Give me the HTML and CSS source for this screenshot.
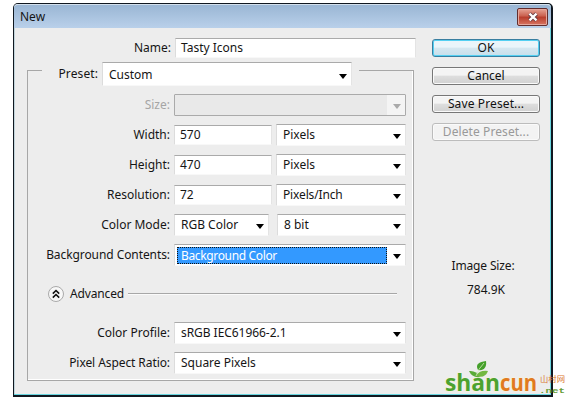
FILE: index.html
```html
<!DOCTYPE html>
<html lang="en">
<head>
<meta charset="utf-8">
<title>New</title>
<link rel="stylesheet" href="styles.css">
</head>
<body>
<main class="dialog">
  <header class="titlebar"><span>New</span>
    <button class="close" aria-label="Close"><svg width="12" height="10" viewBox="0 0 12 10"><path d="M2.5 1.7 9.5 8.3M9.5 1.7 2.5 8.3" stroke="#653b43" stroke-width="4"/><path d="M2.5 1.7 9.5 8.3M9.5 1.7 2.5 8.3" stroke="#fff" stroke-width="2.3"/></svg></button>
  </header>
  <div class="content">
    <section class="form">
      <div class="row name-row"><label class="label">Name:</label><div class="field name">Tasty Icons</div></div>
      <div class="group">
        <div class="preset-row"><label class="preset-label">Preset:</label><div class="field select preset"><span>Custom</span></div></div>
        <div class="row size-row"><label class="label dim">Size:</label><div class="field select wide disabled"></div></div>
        <div class="row"><label class="label">Width:</label><div class="field number">570</div><div class="field select unit"><span>Pixels</span></div></div>
        <div class="row"><label class="label">Height:</label><div class="field number">470</div><div class="field select unit"><span>Pixels</span></div></div>
        <div class="row"><label class="label">Resolution:</label><div class="field number">72</div><div class="field select unit"><span class="inch">Pixels/Inch</span></div></div>
        <div class="row"><label class="label">Color Mode:</label><div class="field select mode"><span>RGB Color</span></div><div class="field select depth"><span>8 bit</span></div></div>
        <div class="row"><label class="label contents-label">Background Contents:</label><div class="field select wide active"><span class="chosen">Background Color</span></div></div>
        <div class="advanced"><svg width="18" height="18" viewBox="0 0 18 18"><circle cx="9" cy="9" r="7.5" fill="#f8f8f8" stroke="#aaa"/><path d="M5.8 8.6 9 5.5l3.2 3.1M5.8 12.6 9 9.5l3.2 3.1" fill="none" stroke="#111" stroke-width="1.6"/></svg><span>Advanced</span><i></i></div>
        <div class="row"><label class="label">Color Profile:</label><div class="field select wide profile"><span>sRGB IEC61966-2.1</span></div></div>
        <div class="row"><label class="label ratio-label">Pixel Aspect Ratio:</label><div class="field select wide"><span>Square Pixels</span></div></div>
      </div>
    </section>
    <aside class="side">
      <button class="button primary">OK</button>
      <button class="button">Cancel</button>
      <button class="button save">Save Preset...</button>
      <button class="button off" disabled>Delete Preset...</button>
      <p class="image-size">Image Size:</p>
      <p class="size-value">784.9K</p>
    </aside>
  </div>
</main>
<svg class="watermark" width="130" height="42" viewBox="440 358 130 42">
  <g class="brand"><text x="445" y="391" textLength="55" lengthAdjust="spacingAndGlyphs" fill="#4ca22f">shan</text><text x="500" y="391" textLength="37" lengthAdjust="spacingAndGlyphs" fill="#e17a20">cun</text></g>
  <path d="M478 370C475 364 479 362 486 361C487 367 484 371 478 370Z" fill="#45a02b"/>
  <path d="M469 371Q476 370 480 377Q472 378 469 371Z" fill="#59ab37"/>
  <path d="M488 371Q479 370 476 376Q485 379 488 371Z" fill="#73b842"/>
  <path d="M476 376Q478 369 484 363" fill="none" stroke="#d5e7bc" stroke-width=".8"/>
  <text class="region" x="540" y="382" textLength="25" lengthAdjust="spacingAndGlyphs">山村网</text>
  <text class="net" x="539" y="392.5" textLength="26" lengthAdjust="spacingAndGlyphs">.net</text>
</svg>
</body>
</html>
```
FILE: styles.css
```css
* { box-sizing: border-box; }
body { margin: 0; padding: 3px 0 0 13px; background: #fff; overflow: hidden; font: 12px/18px "Noto Sans", sans-serif; color: #151515; }
.dialog { width: 540px; height: 394px; border: solid #101820; border-width: 1px 2px 2px 1px; border-radius: 5px 5px 0 0; background: #ededed; box-shadow: inset -1px -1px #69d5df, inset 1px 0 #c2d5dc; }
.titlebar { height: 24px; display: flex; align-items: center; justify-content: space-between; padding: 0 3px 0 6px; border-top: 1px solid #d3e0ed; border-radius: 4px 4px 0 0; background: linear-gradient(#9ab6d4, #b9d0ea); }
.close { width: 31px; height: 18px; margin-top: 1px; padding: 0; display: flex; align-items: center; justify-content: center; border: 1px solid #642e2e; border-radius: 2px; background: linear-gradient(#e6a294, #c95f4d 45%, #b73c2b 50%, #d87562); box-shadow: inset 0 0 0 1px #e5a79c; }
.content { display: flex; }
.form { width: 402px; flex: none; padding-top: 9px; }
.row { display: flex; align-items: center; height: 22px; margin-bottom: 8px; }
.label { width: 142px; margin-right: 4px; text-align: right; white-space: nowrap; flex: none; }
.name-row { margin: 0 0 0 13px; }
.name-row .label { width: 144px; margin-right: 4px; }
.contents-label, .ratio-label { letter-spacing: -.08px; }
.field { height: 20px; padding-left: 6px; border: 1px solid; border-color: #aaa #e4e4e4 #f8f8f8 #dcdcdc; background: #fff; white-space: nowrap; }
.name { width: 241px; padding-left: 5px; }
.group { width: 387px; height: 311px; margin: 11px 0 0 13px; border: 1px solid #a7a7a7; box-shadow: inset -1px -1px #fff; }
.preset-row { width: 317px; height: 24px; margin: -9px 0 8px 14px; display: flex; align-items: center; background: #ededed; }
.preset-label { width: 56px; text-align: right; margin-right: 4px; letter-spacing: .1px; }
.select { position: relative; height: 22px; line-height: 20px; flex: none; }
.select::after { content: ""; position: absolute; right: 4px; top: 9px; width: 8px; height: 5px; background: #000; clip-path: polygon(0 0, 100% 0, 50% 100%); }
.preset { width: 250px; height: 24px; line-height: 23px; }
.preset::after { top: 11px; }
.wide { width: 232px; }
.dim { color: #a5a5a5; }
.disabled { border-color: #aaa; background: #e9e9e9; border-radius: 1px; }
.disabled::before { content: ""; position: absolute; right: 0; top: 0; width: 18px; height: 20px; background: #f4f4f4; }
.disabled::after { background: #aaa; }
.number { width: 98px; padding-left: 5px; margin-right: 4px; }
.unit { width: 130px; }
.inch { letter-spacing: -.15px; }
.mode { width: 95px; margin-right: 8px; }
.depth { width: 129px; }
.active { padding: 2px 0 0 2px; }
.chosen { display: block; width: 210px; height: 17px; line-height: 15px; padding-left: 3px; background: #3399ff; color: #fff; border: 1px dotted #111; letter-spacing: -.35px; }
.advanced { height: 18px; margin: 19px 0; padding-left: 19px; display: flex; align-items: center; }
.advanced span { margin-left: 5px; letter-spacing: -.15px; }
.advanced i { width: 269px; height: 2px; margin-left: 4px; border-top: 1px solid #a7a7a7; border-bottom: 1px solid #fafafa; }
.profile { letter-spacing: -.05px; }
.side { width: 108px; margin-left: 16px; padding-top: 11px; display: flex; flex-direction: column; align-items: center; }
.button { width: 108px; height: 18px; margin-bottom: 10px; padding: 0; border: 1px solid #777; border-radius: 3px; background: linear-gradient(#f4f4f4 45%, #dedede 50%, #d1d1d1); box-shadow: inset 0 0 0 1px #fafafa; font: 12px/16px "Noto Sans", sans-serif; color: #111; }
.save { letter-spacing: .12px; }
.primary { border-color: #397ea0; background: linear-gradient(#eaf5fa 45%, #d5e7f0 50%, #c7dfeb); box-shadow: inset 0 0 0 1px #54d0f2; }
.off { color: #999; border-color: #bcbcbc; background: #f3f3f3; letter-spacing: .1px; }
.image-size { margin: 106px 0 6px -6px; letter-spacing: -.15px; }
.size-value { margin: 0; }
.watermark { position: absolute; left: 440px; top: 358px; }
.brand { font: 700 23px "Open Sans", sans-serif; stroke: #f5f2df; stroke-width: 1.5px; paint-order: stroke; }
.region { font: 8px "Noto Sans CJK SC", sans-serif; fill: #da762d; }
.net { font: 700 8px "Liberation Mono", monospace; fill: #669e36; }
```
